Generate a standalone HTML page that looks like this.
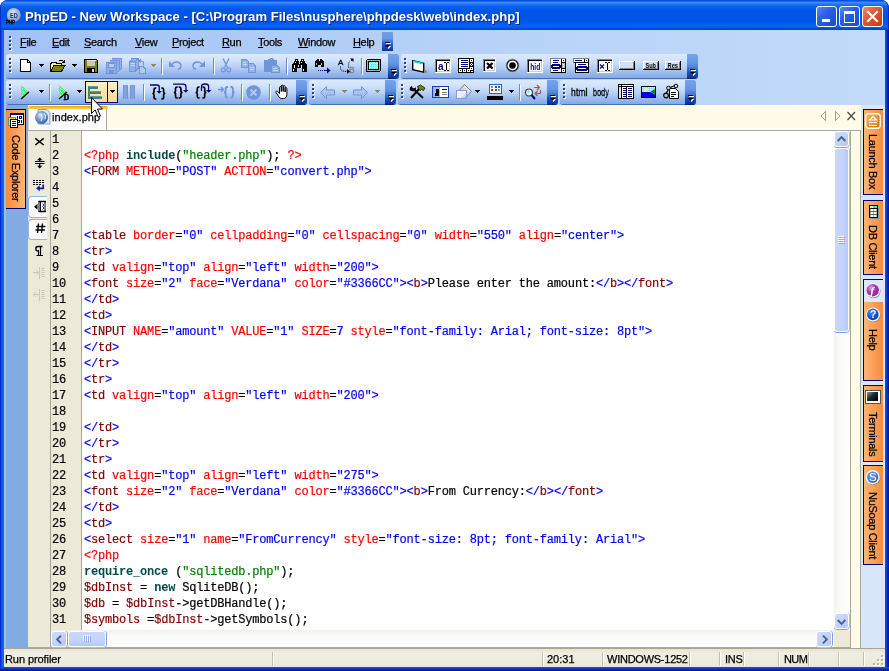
<!DOCTYPE html>
<html>
<head>
<meta charset="utf-8">
<title>PhpED - New Workspace</title>
<style>
html,body{margin:0;padding:0;}
body{width:889px;height:671px;overflow:hidden;position:relative;background:#fff;font-family:"Liberation Sans",sans-serif;font-size:11px;color:#000;}
.a{position:absolute;}
svg{position:absolute;overflow:visible;}
#frame{position:absolute;left:0;top:0;width:889px;height:671px;background:#0a4ae0;border-radius:8px 8px 0 0;overflow:hidden;}
#title{position:absolute;left:0;top:0;width:889px;height:30px;
 background:linear-gradient(#0040d0 0%,#1060ee 4%,#3a8cff 8%,#2a7af8 13%,#0a62f0 21%,#0357e8 32%,#0054e6 50%,#0056ea 74%,#0a64f6 87%,#0552e0 94%,#0240b8 100%);}
#title:after{content:'';position:absolute;left:0;top:0;width:889px;height:30px;box-sizing:border-box;border-left:1px solid #0a30c4;border-right:1px solid #0a2cb8;border-radius:8px 8px 0 0;}
#title .txt{position:absolute;left:25px;top:9px;font-weight:bold;font-size:13.1px;line-height:16px;color:#fff;white-space:nowrap;text-shadow:1px 1px 0 #0a2a88;}
.cap{position:absolute;top:6px;width:19px;height:19px;border:1px solid #fff;border-radius:3px;
 background:linear-gradient(135deg,#5a8cf5 0%,#2a5fe4 40%,#1c49cf 100%);}
.cap.close{background:linear-gradient(135deg,#ec8e72 0%,#e0542c 45%,#c43c14 100%);}
#client{position:absolute;left:4px;top:30px;width:881px;height:637px;background:#c3daf9;}
#dock{position:absolute;left:4px;top:30px;width:881px;height:75px;background:linear-gradient(90deg,#a3c2f5 0%,#b4d0f7 45%,#c3dbfa 100%);}
.tb{position:absolute;height:24px;border-radius:3px 0 0 3px;
 background:linear-gradient(#dceafd 0%,#d1e2fb 25%,#bcd3f6 50%,#9cbcee 76%,#83aae4 100%);box-shadow:0 1px 0 #456db8;}
.tbend{position:absolute;top:0;width:11px;height:24px;border-radius:0 3px 3px 0;
 background:linear-gradient(#75a3ea 0%,#6595e3 38%,#4c7fd6 55%,#1d52b8 76%,#05329a 100%);box-shadow:0 1px 0 #02246c;}
.grip{position:absolute;width:2px;height:2px;background:#27408b;box-shadow:1px 1px 0 #fff;}
.sep{position:absolute;width:1px;height:16px;background:#6a8ccb;box-shadow:1px 1px 0 #fff;}
.mi,.vt,#status .t,.uit{-webkit-text-stroke:0.25px #000;}
.mi{position:absolute;top:6px;font-size:11px;line-height:13px;white-space:nowrap;letter-spacing:-0.35px;}
.mi u{text-decoration:underline;text-underline-offset:1px;}
.dd{position:absolute;width:5px;height:1px;background:#000;}
.dd:before{content:'';position:absolute;left:1px;top:1px;width:3px;height:1px;background:inherit;}
.dd:after{content:'';position:absolute;left:2px;top:2px;width:1px;height:1px;background:inherit;}
.dd.dis{background:#8e8468;}
.code{font-family:"Liberation Mono",monospace;font-size:12px;letter-spacing:-0.19px;line-height:16px;}
.code .ln,.code .cl{height:16px;overflow:visible;white-space:pre;-webkit-text-stroke:0.2px currentColor;}
.code .kw{-webkit-text-stroke:0;}
.r{color:#ff0000}.b{color:#0000ff}.m{color:#800000}.k{color:#000}.g{color:#008000}.kw{color:#004a4a;font-weight:bold}
#status{position:absolute;left:4px;top:648px;width:881px;height:19px;background:linear-gradient(#e6e3d4 0,#efeee4 4px,#eeece0 10px,#ece9d8 17px,#dedac8 19px);border-top:1px solid #aaa693;box-sizing:border-box;}
#status .t{position:absolute;top:4px;font-size:11px;line-height:13px;white-space:nowrap;}
.sdiv{position:absolute;top:3px;width:1px;height:14px;background:#c2bfae;box-shadow:1px 0 0 #fff;}
.sbtn{position:absolute;box-sizing:border-box;border:1px solid #fff;border-radius:3px;background:linear-gradient(135deg,#cfdcfd 0%,#c2d3fc 50%,#b4c8f7 100%);}
.sbtn.v{box-shadow:0 1px 0 #7f9fe0, 1px 0 0 #a9bfee;}
.sbtn.h{box-shadow:1px 0 0 #7f9fe0, 0 1px 0 #a9bfee;}
.sthv{background:linear-gradient(90deg,#c9d7fc 0%,#c6d4fb 55%,#b3c9f7 100%);}
.sthh{background:linear-gradient(#c9d7fc 0%,#c6d4fb 55%,#b3c9f7 100%);}
.vt{position:absolute;writing-mode:vertical-rl;font-size:11px;line-height:15px;width:15px;white-space:nowrap;letter-spacing:-0.3px;}
#bl{position:absolute;left:0;top:30px;width:4px;height:641px;background:linear-gradient(90deg,#0019c0 0,#0a40dc 1px,#0f58ee 2px,#1666f2 3px,#1262ee 4px);}
#br{position:absolute;left:885px;top:30px;width:4px;height:641px;background:linear-gradient(90deg,#0c52e6 0,#0a48dc 1px,#0634c4 2px,#011c9e 3px,#001494 4px);}
#bb{position:absolute;left:0;top:667px;width:889px;height:4px;background:linear-gradient(#0c54ea 0,#0a48dc 1px,#0634c4 2px,#011c9e 3px,#001494 4px);}
.code,.mi,.vt,#status .t,.uit,#title .txt,.gs{will-change:transform;}
</style>
</head>
<body>
<div id="frame">
 <div id="title">
  <svg class="gs" style="left:5px;top:8px" width="18" height="18" viewBox="0 0 18 18">
   <defs><radialGradient id="gl" cx="42%" cy="38%" r="65%"><stop offset="0" stop-color="#e8eef6"/><stop offset="0.55" stop-color="#a9b9d4"/><stop offset="1" stop-color="#7f93bc"/></radialGradient></defs>
   <circle cx="8.800" cy="7" r="7" fill="url(#gl)"/>
   <text x="5" y="9.700" font-family="Liberation Sans, sans-serif" font-weight="bold" font-size="6.800" textLength="7.600" lengthAdjust="spacingAndGlyphs" fill="#0a2a80">ED</text>
   <text x="1" y="15.800" font-family="Liberation Sans, sans-serif" font-weight="bold" font-size="5.500" textLength="9" lengthAdjust="spacingAndGlyphs" fill="#000" stroke="#000" stroke-width="0.300">PHP</text>
  </svg>
  <div class="txt">PhpED - New Workspace - [C:\Program Files\nusphere\phpdesk\web\index.php]</div>
  <div class="cap" style="left:816px"><div class="a" style="left:5px;top:12px;width:8px;height:3px;background:#fff"></div></div>
  <div class="cap" style="left:839px"><div class="a" style="left:4px;top:4px;width:9px;height:8px;border:1px solid #fff;border-top-width:3px;box-sizing:content-box"></div></div>
  <div class="cap close" style="left:862px"><svg style="left:0;top:0" width="19" height="19" viewBox="0 0 19 19"><path d="M5 5 L14 14 M14 5 L5 14" stroke="#fff" stroke-width="2.2" stroke-linecap="square"/></svg></div>
 </div>
 <div id="client"></div>
 <div id="dock"></div>
 <!-- menu bar -->
 <div class="grip" style="left:9px;top:36px"></div><div class="grip" style="left:9px;top:40px"></div><div class="grip" style="left:9px;top:44px"></div><div class="grip" style="left:9px;top:48px"></div>
 <div class="mi" style="left:20px;top:36px"><u>F</u>ile</div>
 <div class="mi" style="left:52px;top:36px"><u>E</u>dit</div>
 <div class="mi" style="left:84px;top:36px"><u>S</u>earch</div>
 <div class="mi" style="left:135px;top:36px"><u>V</u>iew</div>
 <div class="mi" style="left:172px;top:36px"><u>P</u>roject</div>
 <div class="mi" style="left:222px;top:36px"><u>R</u>un</div>
 <div class="mi" style="left:258px;top:36px"><u>T</u>ools</div>
 <div class="mi" style="left:298px;top:36px"><u>W</u>indow</div>
 <div class="mi" style="left:353px;top:36px"><u>H</u>elp</div>
 <div class="a" style="left:382px;top:32px;width:11px;height:19px;background:linear-gradient(#6f9fe8 0%,#6796e4 35%,#2f63c2 62%,#07359a 100%)"></div>
 <!-- toolbars -->
<div class="a" style="left:386px;top:43px;width:5px;height:1px;background:#fff"></div><div class="a" style="left:385px;top:42px;width:5px;height:1px;background:#000"></div><svg style="left:385px;top:45px" width="7" height="5" viewBox="0 0 7 5"><path d="M1 1h5l-2.5 3z" fill="#fff"/><path d="M0 0h5l-2.5 3z" fill="#000"/></svg>
<div class="tb" style="left:6px;top:54px;width:382px"></div><div class="tbend" style="left:388px;top:54px"></div><div class="a" style="left:392px;top:70px;width:5px;height:1px;background:#fff"></div><div class="a" style="left:391px;top:69px;width:5px;height:1px;background:#000"></div><svg style="left:391px;top:72px" width="7" height="5" viewBox="0 0 7 5"><path d="M1 1h5l-2.5 3z" fill="#fff"/><path d="M0 0h5l-2.5 3z" fill="#000"/></svg><div class="grip" style="left:9px;top:58px"></div><div class="grip" style="left:9px;top:62px"></div><div class="grip" style="left:9px;top:66px"></div><div class="grip" style="left:9px;top:70px"></div>
<div class="tb" style="left:401px;top:54px;width:286px"></div><div class="tbend" style="left:687px;top:54px"></div><div class="a" style="left:691px;top:70px;width:5px;height:1px;background:#fff"></div><div class="a" style="left:690px;top:69px;width:5px;height:1px;background:#000"></div><svg style="left:690px;top:72px" width="7" height="5" viewBox="0 0 7 5"><path d="M1 1h5l-2.5 3z" fill="#fff"/><path d="M0 0h5l-2.5 3z" fill="#000"/></svg><div class="grip" style="left:404px;top:58px"></div><div class="grip" style="left:404px;top:62px"></div><div class="grip" style="left:404px;top:66px"></div><div class="grip" style="left:404px;top:70px"></div>
<div class="sep" style="left:161px;top:58px"></div>
<div class="sep" style="left:213px;top:58px"></div>
<div class="sep" style="left:286px;top:58px"></div>
<div class="sep" style="left:361px;top:58px"></div>
<div class="dd" style="left:39px;top:64px"></div>
<div class="dd" style="left:72px;top:64px"></div>
<div class="dd dis" style="left:151px;top:64px"></div>
<div class="tb" style="left:6px;top:80px;width:290px"></div><div class="tbend" style="left:296px;top:80px"></div><div class="a" style="left:300px;top:96px;width:5px;height:1px;background:#fff"></div><div class="a" style="left:299px;top:95px;width:5px;height:1px;background:#000"></div><svg style="left:299px;top:98px" width="7" height="5" viewBox="0 0 7 5"><path d="M1 1h5l-2.5 3z" fill="#fff"/><path d="M0 0h5l-2.5 3z" fill="#000"/></svg><div class="grip" style="left:9px;top:84px"></div><div class="grip" style="left:9px;top:88px"></div><div class="grip" style="left:9px;top:92px"></div><div class="grip" style="left:9px;top:96px"></div>
<div class="tb" style="left:309px;top:80px;width:76px"></div><div class="tbend" style="left:385px;top:80px"></div><div class="a" style="left:389px;top:96px;width:5px;height:1px;background:#fff"></div><div class="a" style="left:388px;top:95px;width:5px;height:1px;background:#000"></div><svg style="left:388px;top:98px" width="7" height="5" viewBox="0 0 7 5"><path d="M1 1h5l-2.5 3z" fill="#fff"/><path d="M0 0h5l-2.5 3z" fill="#000"/></svg><div class="grip" style="left:312px;top:84px"></div><div class="grip" style="left:312px;top:88px"></div><div class="grip" style="left:312px;top:92px"></div><div class="grip" style="left:312px;top:96px"></div>
<div class="tb" style="left:398px;top:80px;width:149px"></div><div class="tbend" style="left:547px;top:80px"></div><div class="a" style="left:551px;top:96px;width:5px;height:1px;background:#fff"></div><div class="a" style="left:550px;top:95px;width:5px;height:1px;background:#000"></div><svg style="left:550px;top:98px" width="7" height="5" viewBox="0 0 7 5"><path d="M1 1h5l-2.5 3z" fill="#fff"/><path d="M0 0h5l-2.5 3z" fill="#000"/></svg><div class="grip" style="left:401px;top:84px"></div><div class="grip" style="left:401px;top:88px"></div><div class="grip" style="left:401px;top:92px"></div><div class="grip" style="left:401px;top:96px"></div>
<div class="tb" style="left:560px;top:80px;width:125px"></div><div class="tbend" style="left:685px;top:80px"></div><div class="a" style="left:689px;top:96px;width:5px;height:1px;background:#fff"></div><div class="a" style="left:688px;top:95px;width:5px;height:1px;background:#000"></div><svg style="left:688px;top:98px" width="7" height="5" viewBox="0 0 7 5"><path d="M1 1h5l-2.5 3z" fill="#fff"/><path d="M0 0h5l-2.5 3z" fill="#000"/></svg><div class="grip" style="left:563px;top:84px"></div><div class="grip" style="left:563px;top:88px"></div><div class="grip" style="left:563px;top:92px"></div><div class="grip" style="left:563px;top:96px"></div>
<div class="sep" style="left:49px;top:84px"></div>
<div class="sep" style="left:143px;top:84px"></div>
<div class="sep" style="left:241px;top:84px"></div>
<div class="sep" style="left:269px;top:84px"></div>
<div class="sep" style="left:519px;top:84px"></div>
<div class="dd" style="left:39px;top:90px"></div>
<div class="dd" style="left:77px;top:90px"></div>
<div class="dd dis" style="left:342px;top:90px"></div>
<div class="dd dis" style="left:375px;top:90px"></div>
<div class="dd" style="left:475px;top:90px"></div>
<div class="dd" style="left:509px;top:90px"></div>
<div class="a" style="left:85px;top:81px;width:31px;height:20px;border:1px solid #000080;background:linear-gradient(#fff2c8,#ffd596);box-sizing:content-box"></div>
<div class="a" style="left:107px;top:81px;width:1px;height:22px;background:#000080"></div>
<div class="dd" style="left:110px;top:90px"></div>
<!--ICONS-->
 <!-- icons -->
<svg style="left:20px;top:59px" width="11" height="13" viewBox="0 0 11 13" shape-rendering="crispEdges"><path d="M0.500 0.500h7l3 3v9h-10z" fill="#fff" stroke="#000"/><path d="M7.500 0.500v3h3" fill="none" stroke="#000"/></svg>
<svg style="left:50px;top:59px" width="16" height="14" viewBox="0 0 16 14" shape-rendering="crispEdges"><path d="M0.500 12.500v-8.500h1l1-1h3l1 1h5v2" fill="#ffe680" stroke="#000"/><path d="M1 5h10v2h-10z" fill="#fff2a8"/><path d="M0.500 12.500l3.500-6h11l-3.500 6z" fill="#808000" stroke="#000"/><path d="M8.500 2.500c1.500-2 4-2 5 0.500" fill="none" stroke="#000"/><path d="M14.500 0.500v3h-3" fill="none" stroke="#000"/></svg>
<svg style="left:84px;top:59px" width="14" height="14" viewBox="0 0 14 14" shape-rendering="crispEdges"><path d="M0.500 0.500h12l1 1v12h-13z" fill="#808000" stroke="#000"/><rect x="3" y="1" width="8" height="6" fill="#c8c8c0"/><rect x="3" y="1" width="8" height="1" fill="#e8e8e0"/><rect x="3" y="9" width="8" height="4.500" fill="#000"/><rect x="8" y="10" width="2" height="3" fill="#d8d8d0"/><rect x="11" y="1" width="1" height="1" fill="#fff"/></svg>
<svg style="left:106px;top:58px" width="16" height="16" viewBox="0 0 16 16" shape-rendering="crispEdges"><path d="M5.500 0.500h10v10l-4 4" fill="#93b1e6" stroke="#7194d6"/><path d="M3.500 2.500h10v10l-2 2" fill="#93b1e6" stroke="#7194d6"/><rect x="0.500" y="4.500" width="10" height="11" fill="#93b1e6" stroke="#7194d6"/><rect x="2.500" y="5.500" width="6" height="4" fill="#b8cdf0" stroke="#7194d6"/><rect x="3" y="12" width="5" height="3" fill="#7194d6"/></svg>
<svg style="left:129px;top:58px" width="17" height="16" viewBox="0 0 17 16" shape-rendering="crispEdges"><path d="M0.500 3.500l2.500-3h6v10l-2.500 3h-6z" fill="#93b1e6" stroke="#7194d6"/><path d="M6.500 3.500v10M0.500 3.500h6l2.500-3" fill="none" stroke="#7194d6"/><path d="M1.500 5.500h4M1.500 7.500h4" stroke="#c5d6f3"/><rect x="3" y="10" width="1" height="1" fill="#7194d6"/><path d="M14.500 7.500v-2.500c0-1.500-1-2-2.500-2h-1" fill="none" stroke="#7194d6" stroke-width="1.200" shape-rendering="auto"/><path d="M9 3l3-2.500v5z" fill="#7194d6" shape-rendering="auto"/><path d="M10.500 8.500h3.500l2 2v5h-5.500z" fill="#b5caef" stroke="#7194d6"/></svg>
<svg style="left:169px;top:61px" width="13" height="9" viewBox="0 0 13 9"><path d="M0 0v6h6z" fill="#7194d6"/><path d="M3 3.500c2-3.500 8-3.500 9 0.500c0.500 2-1 4-3 4" fill="none" stroke="#7194d6" stroke-width="1.400"/></svg>
<svg style="left:192px;top:61px" width="13" height="9" viewBox="0 0 13 9"><path d="M13 0v6h-6z" fill="#7194d6"/><path d="M10 3.500c-2-3.500-8-3.500-9 0.500c-0.500 2 1 4 3 4" fill="none" stroke="#7194d6" stroke-width="1.400"/></svg>
<svg style="left:221px;top:58px" width="10" height="15" viewBox="0 0 10 15"><path d="M2 0.500l4.500 9M8 0.500l-4.500 9" stroke="#7194d6" stroke-width="1.300" fill="none"/><circle cx="2.300" cy="11.800" r="2" fill="none" stroke="#7194d6" stroke-width="1.200"/><circle cx="7.700" cy="11.800" r="2" fill="none" stroke="#7194d6" stroke-width="1.200"/></svg>
<svg style="left:241px;top:59px" width="16" height="14" viewBox="0 0 16 14" shape-rendering="crispEdges"><path d="M0.500 0.500h5l2 2v6h-7z" fill="#93b1e6" stroke="#7194d6"/><path d="M2 3.500h3M2 5.500h4" stroke="#c9d9f4"/><path d="M7.500 4.500h5l2 2v6.500h-7z" fill="#93b1e6" stroke="#7194d6"/><path d="M9 8.500h4M9 10.500h4" stroke="#c9d9f4"/></svg>
<svg style="left:264px;top:58px" width="17" height="15" viewBox="0 0 17 15" shape-rendering="crispEdges"><path d="M0.500 2.500h12v11h-12z" fill="#7194d6" stroke="#7194d6"/><path d="M4.500 2.500v-1h1.500v-1h2v1h1.500v1z" fill="#93b1e6" stroke="#7194d6"/><path d="M7.500 7.500h6l2 2v5h-8z" fill="#93b1e6" stroke="#7194d6"/><path d="M9 10.500h4M9 12.500h5" stroke="#c9d9f4"/></svg>
<svg style="left:292px;top:59px" width="15" height="13" viewBox="0 0 15 13" shape-rendering="crispEdges"><rect x="3" y="0" width="3" height="2" fill="#000"/><rect x="9" y="0" width="3" height="2" fill="#000"/><rect x="2" y="2" width="5" height="2" fill="#000"/><rect x="8" y="2" width="5" height="2" fill="#000"/><rect x="1" y="4" width="6" height="1" fill="#000"/><rect x="8" y="4" width="6" height="1" fill="#000"/><rect x="0" y="5" width="15" height="4" fill="#000"/><rect x="0" y="9" width="5" height="4" fill="#000"/><rect x="10" y="9" width="5" height="4" fill="#000"/><rect x="4" y="1" width="1" height="1" fill="#fff"/><rect x="10" y="1" width="1" height="1" fill="#fff"/><rect x="3" y="3" width="1" height="1" fill="#fff"/><rect x="9" y="3" width="1" height="1" fill="#fff"/><rect x="2" y="6" width="1" height="3" fill="#fff"/><rect x="9" y="6" width="1" height="3" fill="#fff"/><rect x="6" y="6" width="1" height="2" fill="#c8d8f0"/><rect x="1" y="10" width="1" height="2" fill="#fff"/><rect x="11" y="10" width="1" height="2" fill="#fff"/></svg>
<svg style="left:315px;top:59px" width="16" height="15" viewBox="0 0 16 15" shape-rendering="crispEdges"><rect x="2" y="0" width="2" height="1" fill="#000"/><rect x="5" y="0" width="2" height="1" fill="#000"/><rect x="1" y="1" width="3" height="1" fill="#000"/><rect x="5" y="1" width="3" height="1" fill="#000"/><rect x="0" y="2" width="9" height="4" fill="#000"/><rect x="0" y="6" width="3" height="2" fill="#000"/><rect x="6" y="6" width="3" height="2" fill="#000"/><rect x="1" y="4" width="1" height="2" fill="#b0b0b0"/><rect x="6" y="4" width="1" height="2" fill="#b0b0b0"/><rect x="3" y="11" width="1" height="1" fill="#000080"/><rect x="5" y="11" width="1" height="1" fill="#000080"/><rect x="7" y="11" width="1" height="1" fill="#000080"/><rect x="9" y="11" width="6" height="1" fill="#000080"/><path d="M12 8.500l3.500 3l-3.500 3z" fill="#000080" shape-rendering="auto"/></svg>
<svg class="gs" style="left:338px;top:58px" width="17" height="15" viewBox="0 0 17 15"><text x="0" y="7" font-family="Liberation Sans, sans-serif" font-size="8" fill="#000" stroke="#000" stroke-width="0.300">A</text><text x="11" y="15" font-family="Liberation Sans, sans-serif" font-size="8.500" fill="#808080" stroke="#808080" stroke-width="0.300">B</text><path d="M2.500 8.500v1.500c0 2.500 2 3.500 7 3.500" fill="none" stroke="#000" stroke-dasharray="1 1"/><path d="M9 11l3 2.500l-3 2.500z" fill="#000"/><path d="M10.500 9.500v-3c0-2 1-3 3.500-4.500" fill="none" stroke="#000" stroke-dasharray="1 1"/><path d="M12 0.500h3.500v3.500z" fill="#000"/></svg>
<svg style="left:366px;top:59px" width="15" height="13" viewBox="0 0 15 13" shape-rendering="crispEdges"><rect x="0.500" y="0.500" width="14" height="12" rx="1.500" fill="#b0b0a8" stroke="#000"/><rect x="2.500" y="2.500" width="10" height="8" fill="#7fffff" stroke="#000"/><path d="M3 4.500h9M3 6.500h9M3 8.500h9" stroke="#fff" stroke-dasharray="1 1"/><path d="M5.500 3v7M7.500 3v7M9.500 3v7" stroke="#5fd8e8" stroke-dasharray="1 1"/></svg>
<svg style="left:412px;top:60px" width="16" height="13" viewBox="0 0 16 13"><path d="M0.700 0.700l11 2.500v9l-11-2.500z" fill="#fff" stroke="#000" stroke-width="1.400"/><path d="M1 1.200l10 2.300" stroke="#00e0e0" stroke-width="1.600"/><path d="M12 12.500h4l-4-4z" fill="#808080"/></svg>
<svg class="gs" style="left:435px;top:59px" width="16" height="14" viewBox="0 0 16 14" shape-rendering="crispEdges"><rect x="0" y="0" width="16" height="14" fill="#fff"/><path d="M0 13.5h16M15.5 0v14" stroke="#fff"/><path d="M1 12.5h14M14.5 1v12" stroke="#d0cdc0"/><path d="M0 0.500h15M0.500 0v13" stroke="#808080"/><path d="M1 1.500h14M1.500 1v12" stroke="#000"/><text x="3" y="11" font-family="Liberation Sans, sans-serif" font-weight="bold" font-size="10" fill="#000080">a</text><path d="M9 3.500h2m1 0h2M9 11.500h2m1 0h2M11.500 4v7" stroke="#000" fill="none"/></svg>
<svg style="left:458px;top:58px" width="16" height="15" viewBox="0 0 16 15" shape-rendering="crispEdges"><rect x="0" y="0" width="16" height="15" fill="#000"/><rect x="1" y="1" width="10" height="9" fill="#fff"/><path d="M3 2.500h7M3 4.500h7M3 6.500h7M3 8.500h7" stroke="#000080"/><rect x="12" y="1" width="3" height="3" fill="#fff"/><rect x="13" y="2" width="1" height="1" fill="#000"/><rect x="12" y="5" width="3" height="3" fill="#fff"/><path d="M12 5l3 3m0-3l-3 3" stroke="#000" stroke-width="0.800" shape-rendering="auto"/><rect x="12" y="9" width="3" height="3" fill="#fff"/><rect x="13" y="10" width="1" height="1" fill="#000"/><rect x="1" y="11" width="3" height="3" fill="#fff"/><rect x="2" y="12" width="1" height="1" fill="#000"/><rect x="5" y="11" width="3" height="3" fill="#fff"/><rect x="6" y="12" width="1" height="1" fill="#000"/><rect x="9" y="11" width="3" height="3" fill="#fff"/><rect x="10" y="12" width="1" height="1" fill="#000"/><rect x="13" y="13" width="2" height="1" fill="#fff"/></svg>
<svg style="left:483px;top:59px" width="13" height="13" viewBox="0 0 13 13" shape-rendering="crispEdges"><rect x="0" y="0" width="13" height="13" fill="#fff"/><path d="M0 12.5h13M12.5 0v13" stroke="#fff"/><path d="M1 11.5h11M11.5 1v11" stroke="#d0cdc0"/><path d="M0 0.500h12M0.500 0v12" stroke="#808080"/><path d="M1 1.500h11M1.500 1v11" stroke="#000"/><path d="M4 4l5.500 5.500m0-5.500l-5.500 5.500" stroke="#000" stroke-width="2.300" shape-rendering="auto"/></svg>
<svg style="left:506px;top:59px" width="13" height="13" viewBox="0 0 13 13"><circle cx="6.500" cy="6.500" r="5.700" fill="#fff" stroke="#000" stroke-width="1.300"/><circle cx="6.500" cy="6.500" r="6.300" fill="none" stroke="#808080" stroke-width="0.600"/><circle cx="6.500" cy="6.500" r="3.300" fill="#000"/></svg>
<svg class="gs" style="left:527px;top:59px" width="16" height="14" viewBox="0 0 16 14" shape-rendering="crispEdges"><rect x="0" y="0" width="16" height="14" fill="#fff"/><path d="M0 13.5h16M15.5 0v14" stroke="#fff"/><path d="M1 12.5h14M14.5 1v12" stroke="#d0cdc0"/><path d="M0 0.500h15M0.500 0v13" stroke="#808080"/><path d="M1 1.500h14M1.500 1v12" stroke="#000"/><text x="3.300" y="10.800" font-family="Liberation Sans, sans-serif" font-weight="bold" font-size="9" textLength="10" lengthAdjust="spacingAndGlyphs" fill="#000080" shape-rendering="auto">hid</text></svg>
<svg style="left:550px;top:58px" width="16" height="15" viewBox="0 0 16 15" shape-rendering="crispEdges"><rect x="0" y="0" width="16" height="15" fill="#000"/><rect x="0" y="0" width="16" height="1" fill="#808080"/><rect x="0" y="0" width="1" height="15" fill="#808080"/><rect x="1" y="1" width="10" height="13" fill="#fff"/><path d="M3 2.500h6M3 4.500h5M3 12.500h5" stroke="#000080"/><rect x="1" y="7" width="10" height="3" fill="#000080"/><rect x="2" y="6" width="8" height="5" fill="#000080"/><rect x="3" y="8" width="6" height="1" fill="#fff"/><rect x="12" y="1" width="3" height="3" fill="#fff"/><rect x="13" y="2" width="1" height="1" fill="#000"/><rect x="12" y="5" width="3" height="5" fill="#c0c0c0"/><rect x="13" y="6" width="1" height="1" fill="#fff"/><rect x="13" y="8" width="1" height="1" fill="#fff"/><rect x="12" y="11" width="3" height="3" fill="#fff"/><rect x="13" y="12" width="1" height="1" fill="#000"/></svg>
<svg style="left:573px;top:58px" width="16" height="15" viewBox="0 0 16 15" shape-rendering="crispEdges"><rect x="0" y="0" width="16" height="5" fill="#000"/><rect x="0" y="0" width="16" height="1" fill="#808080"/><rect x="0" y="0" width="1" height="5" fill="#808080"/><rect x="1" y="1" width="10" height="3" fill="#fff"/><path d="M2 2.500h7" stroke="#000080"/><rect x="12" y="1" width="3" height="3" fill="#fff"/><rect x="13" y="2" width="1" height="1" fill="#000"/><rect x="2" y="5" width="14" height="10" fill="#000"/><rect x="3" y="5" width="12" height="9" fill="#fff"/><path d="M5 6.500h8" stroke="#000080"/><rect x="3" y="9" width="12" height="3" fill="#000080"/><rect x="4" y="8" width="10" height="5" fill="#000080"/><rect x="5" y="10" width="8" height="1" fill="#fff"/></svg>
<svg style="left:597px;top:59px" width="16" height="14" viewBox="0 0 16 14" shape-rendering="crispEdges"><rect x="0" y="0" width="16" height="14" fill="#fff"/><path d="M0 13.5h16M15.5 0v14" stroke="#fff"/><path d="M1 12.5h14M14.5 1v12" stroke="#d0cdc0"/><path d="M0 0.500h15M0.500 0v13" stroke="#808080"/><path d="M1 1.500h14M1.500 1v12" stroke="#000"/><path d="M3 5.500l4 4m0-4l-4 4" stroke="#000080" stroke-width="1.100" shape-rendering="auto"/><path d="M8 3.500h2m1 0h2M8 11.500h2m1 0h2M10.500 4v7" stroke="#000" fill="none"/></svg>
<svg style="left:619px;top:61px" width="16" height="9" viewBox="0 0 16 9" shape-rendering="crispEdges"><rect x="0" y="0" width="16" height="9" fill="#d2e0f6"/><path d="M0 0.500h15M0.500 0v8" stroke="#fff"/><path d="M0 8.500h16M15.500 0v9" stroke="#000"/><path d="M1 7.500h14M14.500 1v7" stroke="#808080"/></svg>
<svg class="gs" style="left:643px;top:61px" width="16" height="9" viewBox="0 0 16 9" shape-rendering="crispEdges"><rect x="0" y="0" width="16" height="9" fill="#d2e0f6"/><path d="M0 0.500h15M0.500 0v8" stroke="#fff"/><path d="M0 8.500h16M15.500 0v9" stroke="#000"/><path d="M1 7.500h14M14.500 1v7" stroke="#808080"/><text x="2.500" y="7" font-family="Liberation Sans, sans-serif" font-weight="bold" font-size="7" textLength="10.500" lengthAdjust="spacingAndGlyphs" fill="#000" shape-rendering="auto">Sub</text></svg>
<svg class="gs" style="left:665px;top:61px" width="16" height="9" viewBox="0 0 16 9" shape-rendering="crispEdges"><rect x="0" y="0" width="16" height="9" fill="#d2e0f6"/><path d="M0 0.500h15M0.500 0v8" stroke="#fff"/><path d="M0 8.500h16M15.500 0v9" stroke="#000"/><path d="M1 7.500h14M14.500 1v7" stroke="#808080"/><text x="2.500" y="7" font-family="Liberation Sans, sans-serif" font-weight="bold" font-size="7" textLength="10.500" lengthAdjust="spacingAndGlyphs" fill="#000" shape-rendering="auto">Res</text></svg>
<svg style="left:21px;top:85px" width="9" height="15" viewBox="0 0 9 15"><path d="M0 0v14l8-7z" fill="#50f070"/><path d="M0.500 0.500l1 1m-1 1l2 2m-2 1l3 3m-3-1l1 1m-1 1l2 2m-2 0l1 1M2.500 1.500l4 4M3.500 4.500l2 2" stroke="#c8ffc8" stroke-width="0.800" fill="none"/><path d="M0 14l8-7" stroke="#000" stroke-width="1.400" fill="none"/></svg>
<svg class="gs" style="left:59px;top:85px" width="12" height="15" viewBox="0 0 12 15"><path d="M0 0v14l8-7z" fill="#50f070"/><path d="M0.500 0.500l1 1m-1 1l2 2m-2 1l3 3m-3-1l1 1m-1 1l2 2m-2 0l1 1M2.500 1.500l4 4M3.500 4.500l2 2" stroke="#c8ffc8" stroke-width="0.800" fill="none"/><path d="M0 14l8-7" stroke="#000" stroke-width="1.400" fill="none"/><text x="4.500" y="14.500" font-family="Liberation Serif, serif" font-weight="bold" font-size="8" fill="#000" stroke="#000" stroke-width="0.400">D</text></svg>
<svg style="left:88px;top:86px" width="14" height="13" viewBox="0 0 14 13" shape-rendering="crispEdges"><rect x="0" y="0" width="2" height="13" fill="#3f8080"/><rect x="1" y="0" width="9" height="3" fill="#3f8080"/><rect x="1" y="0" width="9" height="1" fill="#5f9c9c"/><rect x="1" y="5" width="12" height="3" fill="#3f8080"/><rect x="1" y="5" width="12" height="1" fill="#5f9c9c"/><rect x="1" y="10" width="13" height="3" fill="#3f8080"/><rect x="1" y="10" width="13" height="1" fill="#5f9c9c"/></svg>
<svg style="left:123px;top:85px" width="12" height="14" viewBox="0 0 12 14" shape-rendering="crispEdges"><rect x="0" y="0" width="5" height="14" fill="#7194d6"/><rect x="7" y="0" width="5" height="14" fill="#7194d6"/><rect x="1" y="0" width="3" height="14" fill="#84a3de"/><rect x="8" y="0" width="3" height="14" fill="#84a3de"/></svg>
<svg style="left:150px;top:84px" width="16" height="16" viewBox="0 0 16 16"><path d="M6.3 4h-0.800q-1.500 0-1.500 1.500v2.5q0 1.500-1.700 1.500q1.700 0 1.700 1.500v2.5q0 1.500 1.500 1.500h0.800M11.3 4h0.800q1.500 0 1.500 1.500v2.5q0 1.500 1.700 1.500q-1.700 0-1.700 1.500v2.5q0 1.500-1.500 1.500h-0.800" fill="none" stroke="#000" stroke-width="1.700"/><path d="M0 1h7c1.800 0 2.300 1 2.300 2.500v4" fill="none" stroke="#000080" stroke-width="1.300"/><path d="M6.500 7h5.400l-2.700 2.800z" fill="#000080"/></svg>
<svg style="left:173px;top:83px" width="17" height="16" viewBox="0 0 17 16"><path d="M4.8 4h-0.800q-1.500 0-1.500 1.500v2.5q0 1.500-1.700 1.500q1.700 0 1.700 1.500v2.5q0 1.500 1.500 1.500h0.800M5.6 4h0.800q1.500 0 1.500 1.500v2.5q0 1.500 1.700 1.500q-1.700 0-1.700 1.500v2.5q0 1.500-1.500 1.500h-0.800" fill="none" stroke="#000" stroke-width="1.700"/><path d="M0 1.200h10c2 0 3 1 3 2.500v3.500" fill="none" stroke="#000080" stroke-width="1.300"/><path d="M10 7h5.400l-2.700 2.800z" fill="#000080"/></svg>
<svg style="left:195px;top:83px" width="17" height="16" viewBox="0 0 17 16"><path d="M4.6 4h-0.800q-1.500 0-1.500 1.500v2.5q0 1.500-1.700 1.500q1.700 0 1.700 1.500v2.5q0 1.500 1.500 1.500h0.800M7.4 4h0.800q1.500 0 1.500 1.500v2.5q0 1.500 1.700 1.500q-1.700 0-1.700 1.500v2.5q0 1.500-1.500 1.500h-0.800" fill="none" stroke="#000" stroke-width="1.700"/><path d="M6.500 8v-4.500c0-1.600 0.800-2.500 3.500-2.500s3.600 0.900 3.600 2.500v3.500" fill="none" stroke="#000080" stroke-width="1.300"/><path d="M11 7h5.400l-2.700 2.800z" fill="#000080"/></svg>
<svg style="left:218px;top:83px" width="18" height="16" viewBox="0 0 18 16"><path d="M10 4h-0.800q-1.500 0-1.500 1.500v2.25q0 1.500-1.700 1.500q1.700 0 1.700 1.500v2.25q0 1.500 1.500 1.500h0.800M12.5 4h0.800q1.500 0 1.500 1.500v2.25q0 1.500 1.700 1.500q-1.700 0-1.700 1.500v2.25q0 1.500-1.500 1.500h-0.800" fill="none" stroke="#7194d6" stroke-width="1.800"/><path d="M0 6.500h5M3 4l2.500 2.500l-2.500 2.500" fill="none" stroke="#7194d6" stroke-width="1.400"/></svg>
<svg style="left:246px;top:85px" width="15" height="15" viewBox="0 0 15 15"><circle cx="7.500" cy="7.500" r="7.300" fill="#7194d6"/><path d="M4.500 4.500l6 6m0-6l-6 6" stroke="#b4c9ef" stroke-width="2"/></svg>
<svg style="left:275px;top:85px" width="14" height="14" viewBox="0 0 14 14"><path d="M4.500 8.500v-6c0-1.200 1.800-1.200 1.800 0v4v-5.500c0-1.200 1.900-1.200 1.900 0v5.500v-5c0-1.200 1.900-1.200 1.900 0v5.500v-3.500c0-1.200 1.800-1.200 1.800 0v6c0 2.500-1.500 4-3.500 4h-1.500c-1.500 0-2.500-0.800-3.500-2.500l-2.400-3.500c-0.600-1 0.600-2 1.500-1.200z" fill="#fff" stroke="#000" stroke-width="1"/></svg>
<svg style="left:320px;top:86px" width="15" height="13" viewBox="0 0 15 13"><path d="M0.500 6.500l6-6v3.500h8v5h-8v3.500z" fill="#a9c4ee" stroke="#7194d6" stroke-width="1"/></svg>
<svg style="left:353px;top:86px" width="15" height="13" viewBox="0 0 15 13"><path d="M14.500 6.500l-6-6v3.500h-8v5h8v3.500z" fill="#a9c4ee" stroke="#7194d6" stroke-width="1"/></svg>
<svg style="left:409px;top:85px" width="16" height="14" viewBox="0 0 16 14"><path d="M2 13l9-10" stroke="#000" stroke-width="2"/><path d="M14 13l-9.500-9" stroke="#000" stroke-width="2"/><path d="M8.500 1.500l3-1.500l4.500 3l-1.500 2.500l-2-1l-1 1l-2-1.500z" fill="#808000" stroke="#000" stroke-width="0.700"/><path d="M1 5.500c-1-2 0-4 2-4.500l0.500 2l2 0.500l1.500-1.500c0.500 2-0.500 4-3 4.500z" fill="#000"/></svg>
<svg style="left:432px;top:86px" width="17" height="12" viewBox="0 0 17 12" shape-rendering="crispEdges"><rect x="0.500" y="0.500" width="16" height="11" fill="#fff" stroke="#1f3fb0"/><rect x="1" y="1" width="7" height="10" fill="#9db9f0"/><path d="M3 10v-3l1-1v-3h2l1 1v2l-1 1l1 1v2z" fill="#000"/><rect x="9" y="1" width="7" height="10" fill="#fff"/><path d="M10 3.500h5" stroke="#000"/><path d="M10 6.500h5M10 8.500h5" stroke="#808080"/></svg>
<svg style="left:456px;top:84px" width="16" height="15" viewBox="0 0 16 15"><defs><linearGradient id="sq" x1="0" y1="0" x2="1" y2="1"><stop offset="0" stop-color="#fff"/><stop offset="0.600" stop-color="#e8eef8"/><stop offset="1" stop-color="#8fb0e8"/></linearGradient></defs><path d="M8.500 0.500l7 7l-6 6.500l-7-7z" fill="#d8d8d0" stroke="#808080"/><path d="M8.500 2l5 5" stroke="#fff"/><rect x="0.500" y="6.500" width="10" height="8" fill="url(#sq)" stroke="#7f9fd8"/></svg>
<svg style="left:487px;top:84px" width="16" height="16" viewBox="0 0 16 16" shape-rendering="crispEdges"><rect x="2.500" y="0.500" width="12" height="9" fill="#f0f4ff" stroke="#2f5fe0"/><rect x="4" y="2" width="2" height="2" fill="#909090"/><rect x="8" y="2" width="2" height="2" fill="#2040e0"/><rect x="11" y="2" width="2" height="2" fill="#109030"/><rect x="4" y="5" width="2" height="2" fill="#e02020"/><rect x="8" y="5" width="2" height="2" fill="#2060c0"/><rect x="11" y="5" width="2" height="2" fill="#f08020"/><rect x="0" y="12" width="16" height="4" fill="#000"/></svg>
<svg style="left:525px;top:84px" width="17" height="16" viewBox="0 0 17 16"><circle cx="4" cy="8.500" r="3.500" fill="#e8f4ff" stroke="#404040" stroke-width="1.200"/><circle cx="3.500" cy="8" r="1" fill="#60e0f0"/><path d="M6.500 11l3.500 4" stroke="#000080" stroke-width="2"/><path d="M9 3.500h5M12 1l2.500 2.500l-2.500 2.500" fill="none" stroke="#a0583c" stroke-width="1.100"/><path d="M15.500 6v3.500h-5M12.500 7l-2.500 2.500l2.500 2.500" fill="none" stroke="#a0583c" stroke-width="1.100"/></svg>
<div class="a gs" style="left:571px;top:86px;font-size:11px;line-height:13px;-webkit-text-stroke:0.350px #000;transform:scaleX(0.760);transform-origin:0 0;letter-spacing:0.300px;white-space:nowrap">html</div>
<div class="a gs" style="left:593px;top:86px;font-size:11px;line-height:13px;-webkit-text-stroke:0.350px #000;transform:scaleX(0.640);transform-origin:0 0;letter-spacing:0.300px;white-space:nowrap">body</div>
<svg style="left:618px;top:84px" width="16" height="15" viewBox="0 0 16 15" shape-rendering="crispEdges"><rect x="0.500" y="0.500" width="15" height="14" fill="#fff" stroke="#000"/><path d="M1 2.500h14" stroke="#000"/><path d="M3.500 1v14M8.500 3v12" stroke="#000"/><path d="M5 4.500h3M5 6.500h3M5 8.500h3M5 10.500h3M5 12.500h3M10 4.500h4M10 6.500h4M10 8.500h4M10 10.500h4M10 12.500h4" stroke="#000080" stroke-width="1"/><rect x="1" y="3" width="2" height="11" fill="#e8e4d0"/></svg>
<svg style="left:641px;top:86px" width="15" height="12" viewBox="0 0 15 12" shape-rendering="crispEdges"><rect x="0.500" y="0.500" width="14" height="11" fill="#8fe8f0" stroke="#000"/><path d="M1 1.500h13M1 3.500h13M1 5.500h13" stroke="#d8fbff" stroke-dasharray="1 1"/><circle cx="5" cy="3.500" r="2" fill="#f8e8a0" shape-rendering="auto"/><path d="M9 6l5-3v5z" fill="#108020" shape-rendering="auto"/><path d="M1 6h8l5 2.500v2.500h-13z" fill="#0000e0" shape-rendering="auto"/></svg>
<svg style="left:663px;top:84px" width="17" height="15" viewBox="0 0 17 15"><path d="M6.500 4.500h6l3 3v7h-9z" fill="#fff" stroke="#000"/><path d="M8 8.500h5M8 10.500h5M8 12.500h3" stroke="#000"/><path d="M3 10l3-6l6-2.500" fill="none" stroke="#000" stroke-width="1.200"/><circle cx="3" cy="11.500" r="2.300" fill="#c0c0c0" stroke="#000" stroke-width="1.200"/><circle cx="5.500" cy="4" r="1.800" fill="#e0e0e0" stroke="#000" stroke-width="1"/><circle cx="13" cy="2" r="1.800" fill="#e0e0e0" stroke="#000" stroke-width="1"/></svg>
 <!-- editor -->
<div class="a" style="left:4px;top:105px;width:24px;height:543px;background:linear-gradient(90deg,#a3c2f3 0,#94b7ee 2px,#82aae3 2px,#82aae3 100%)"></div>
<div class="a" style="left:28px;top:105px;width:833px;height:543px;background:#fffbe8"></div>
<div class="a" style="left:28px;top:128px;width:833px;height:2px;background:#fff"></div>
<div class="a" style="left:28px;top:130px;width:833px;height:518px;background:#aca899"></div>
<div class="a" style="left:851px;top:131px;width:9px;height:517px;background:#fffbe8"></div>
<div class="a" style="left:28px;top:131px;width:22px;height:516px;background:#ece9d8"></div>
<div class="a" style="left:51px;top:131px;width:30px;height:499px;background:#ece9d8"></div>
<div class="a" style="left:82px;top:131px;width:752px;height:499px;background:#fff"></div>
<div class="a" style="left:834px;top:131px;width:16px;height:499px;background:linear-gradient(90deg,#f3f1ec,#fbfbf9 40%,#fefefd)"></div>
<div class="a" style="left:51px;top:630px;width:783px;height:17px;background:linear-gradient(#f3f1ec,#fbfbf9 40%,#fefefd)"></div>
<div class="a" style="left:834px;top:630px;width:16px;height:17px;background:#ece9d8"></div>
<div class="code a" style="left:52px;top:132px;width:30px">
<div class="ln">1</div>
<div class="ln">2</div>
<div class="ln">3</div>
<div class="ln">4</div>
<div class="ln">5</div>
<div class="ln">6</div>
<div class="ln">7</div>
<div class="ln">8</div>
<div class="ln">9</div>
<div class="ln">10</div>
<div class="ln">11</div>
<div class="ln">12</div>
<div class="ln">13</div>
<div class="ln">14</div>
<div class="ln">15</div>
<div class="ln">16</div>
<div class="ln">17</div>
<div class="ln">18</div>
<div class="ln">19</div>
<div class="ln">20</div>
<div class="ln">21</div>
<div class="ln">22</div>
<div class="ln">23</div>
<div class="ln">24</div>
<div class="ln">25</div>
<div class="ln">26</div>
<div class="ln">27</div>
<div class="ln">28</div>
<div class="ln">29</div>
<div class="ln">30</div>
<div class="ln">31</div>
</div>
<div class="code a" style="left:84px;top:132px;width:750px">
<div class="cl"></div>
<div class="cl"><span class="r">&lt;?php</span> <span class="kw">include</span><span class="k">(</span><span class="g">"header.php"</span><span class="k">); </span><span class="r">?&gt;</span></div>
<div class="cl"><span class="b">&lt;</span><span class="m">FORM</span> <span class="r">METHOD</span><span class="k">=</span><span class="b">"POST"</span> <span class="r">ACTION</span><span class="k">=</span><span class="b">"convert.php"&gt;</span></div>
<div class="cl"></div>
<div class="cl"></div>
<div class="cl"></div>
<div class="cl"><span class="b">&lt;</span><span class="m">table</span> <span class="r">border</span><span class="k">=</span><span class="b">"0"</span> <span class="r">cellpadding</span><span class="k">=</span><span class="b">"0"</span> <span class="r">cellspacing</span><span class="k">=</span><span class="b">"0"</span> <span class="r">width</span><span class="k">=</span><span class="b">"550"</span> <span class="r">align</span><span class="k">=</span><span class="b">"center"</span><span class="b">&gt;</span></div>
<div class="cl"><span class="b">&lt;</span><span class="m">tr</span><span class="b">&gt;</span></div>
<div class="cl"><span class="b">&lt;</span><span class="m">td</span> <span class="r">valign</span><span class="k">=</span><span class="b">"top"</span> <span class="r">align</span><span class="k">=</span><span class="b">"left"</span> <span class="r">width</span><span class="k">=</span><span class="b">"200"</span><span class="b">&gt;</span></div>
<div class="cl"><span class="b">&lt;</span><span class="m">font</span> <span class="r">size</span><span class="k">=</span><span class="b">"2"</span> <span class="r">face</span><span class="k">=</span><span class="b">"Verdana"</span> <span class="r">color</span><span class="k">=</span><span class="b">"#3366CC"</span><span class="b">&gt;</span><span class="b">&lt;</span><span class="m">b</span><span class="b">&gt;</span><span class="k">Please enter the amount:</span><span class="b">&lt;/</span><span class="m">b</span><span class="b">&gt;</span><span class="b">&lt;/</span><span class="m">font</span><span class="b">&gt;</span></div>
<div class="cl"><span class="b">&lt;/</span><span class="m">td</span><span class="b">&gt;</span></div>
<div class="cl"><span class="b">&lt;</span><span class="m">td</span><span class="b">&gt;</span></div>
<div class="cl"><span class="b">&lt;</span><span class="m">INPUT</span> <span class="r">NAME</span><span class="k">=</span><span class="b">"amount"</span> <span class="r">VALUE</span><span class="k">=</span><span class="b">"1"</span> <span class="r">SIZE</span><span class="k">=</span><span class="b">7</span> <span class="r">style</span><span class="k">=</span><span class="b">"font-family: Arial; font-size: 8pt"&gt;</span></div>
<div class="cl"><span class="b">&lt;/</span><span class="m">td</span><span class="b">&gt;</span></div>
<div class="cl"><span class="b">&lt;/</span><span class="m">tr</span><span class="b">&gt;</span></div>
<div class="cl"><span class="b">&lt;</span><span class="m">tr</span><span class="b">&gt;</span></div>
<div class="cl"><span class="b">&lt;</span><span class="m">td</span> <span class="r">valign</span><span class="k">=</span><span class="b">"top"</span> <span class="r">align</span><span class="k">=</span><span class="b">"left"</span> <span class="r">width</span><span class="k">=</span><span class="b">"200"</span><span class="b">&gt;</span></div>
<div class="cl"></div>
<div class="cl"><span class="b">&lt;/</span><span class="m">td</span><span class="b">&gt;</span></div>
<div class="cl"><span class="b">&lt;/</span><span class="m">tr</span><span class="b">&gt;</span></div>
<div class="cl"><span class="b">&lt;</span><span class="m">tr</span><span class="b">&gt;</span></div>
<div class="cl"><span class="b">&lt;</span><span class="m">td</span> <span class="r">valign</span><span class="k">=</span><span class="b">"top"</span> <span class="r">align</span><span class="k">=</span><span class="b">"left"</span> <span class="r">width</span><span class="k">=</span><span class="b">"275"</span><span class="b">&gt;</span></div>
<div class="cl"><span class="b">&lt;</span><span class="m">font</span> <span class="r">size</span><span class="k">=</span><span class="b">"2"</span> <span class="r">face</span><span class="k">=</span><span class="b">"Verdana"</span> <span class="r">color</span><span class="k">=</span><span class="b">"#3366CC"</span><span class="b">&gt;</span><span class="b">&lt;</span><span class="m">b</span><span class="b">&gt;</span><span class="k">From Currency:</span><span class="b">&lt;/</span><span class="m">b</span><span class="b">&gt;</span><span class="b">&lt;/</span><span class="m">font</span><span class="b">&gt;</span></div>
<div class="cl"><span class="b">&lt;/</span><span class="m">td</span><span class="b">&gt;</span></div>
<div class="cl"><span class="b">&lt;</span><span class="m">td</span><span class="b">&gt;</span></div>
<div class="cl"><span class="b">&lt;</span><span class="m">select</span> <span class="r">size</span><span class="k">=</span><span class="b">"1"</span> <span class="r">name</span><span class="k">=</span><span class="b">"FromCurrency"</span> <span class="r">style</span><span class="k">=</span><span class="b">"font-size: 8pt; font-family: Arial"&gt;</span></div>
<div class="cl"><span class="r">&lt;?php</span></div>
<div class="cl"><span class="kw">require_once</span><span class="k"> (</span><span class="g">"sqlitedb.php"</span><span class="k">);</span></div>
<div class="cl"><span class="m">$dbInst</span><span class="k"> = </span><span class="kw">new</span><span class="k"> SqliteDB();</span></div>
<div class="cl"><span class="m">$db</span><span class="k"> = </span><span class="m">$dbInst</span><span class="k">-&gt;getDBHandle();</span></div>
<div class="cl"><span class="m">$symbols</span><span class="k"> =</span><span class="m">$dbInst</span><span class="k">-&gt;getSymbols();</span></div>
</div>
<!--EDEXTRA-->
 <!-- active tab -->
 <div class="a" style="left:28px;top:106px;width:79px;height:24px;background:#fff;border-radius:4px 4px 0 0;border-right:1px solid #aca899;border-left:1px solid #d6d3c2;box-sizing:border-box"></div>
 <div class="a" style="left:28px;top:106px;width:80px;height:3px;border-radius:3px 3px 0 0;background:linear-gradient(#e89c08 0%,#ffbe3a 50%,#ffc940 100%)"></div>
 <div class="a" style="left:29px;top:109px;width:77px;height:20px;background:linear-gradient(#ffffff,#fbfbfd)"></div>
 <svg style="left:34px;top:108px" width="17" height="18" viewBox="0 0 17 18">
  <defs><radialGradient id="tg" cx="40%" cy="35%" r="70%"><stop offset="0" stop-color="#cfe0f4"/><stop offset="0.5" stop-color="#6f97cc"/><stop offset="1" stop-color="#2f5a9c"/></radialGradient></defs>
  <path d="M4 1.5h9l3 3v11.5h-12z" fill="#d9e6f8" stroke="#7f9fd0" stroke-width="1"/>
  <circle cx="7.5" cy="9.5" r="6.5" fill="url(#tg)"/>
  <path d="M5 6.5c1.5-1 3 0 3.2 1.6c.2 1.6-.8 3.4-1 5M9.8 5.2c1.6 1.2 2 3.6 1 6" stroke="#eaf2fb" stroke-width="1.1" fill="none"/>
 </svg>
 <div class="a uit" style="left:52px;top:111px;font-size:11px;line-height:13px;letter-spacing:0.05px">index.php</div>
 <!-- tab nav -->
 <svg style="left:819px;top:110px" width="40" height="13" viewBox="0 0 40 13">
  <path d="M6.5 1.5v9l-4.5-4.5z" fill="none" stroke="#9d9d92" stroke-width="1"/>
  <path d="M16.5 1.5v9l4.500-4.500z" fill="none" stroke="#9d9d92" stroke-width="1"/>
  <path d="M28.500 2l7.500 8m0-8l-7.500 8" stroke="#484848" stroke-width="1.250"/>
 </svg>
 <!-- gutter toggled buttons -->
 <div class="a" style="left:28px;top:196px;width:19px;height:22px;background:#fff;border:1px solid #98b4e2;border-right:none;border-radius:4px 0 0 4px;box-sizing:border-box"></div>
 <div class="a" style="left:28px;top:219px;width:19px;height:21px;background:#fff;border:1px solid #98b4e2;border-right:none;border-radius:4px 0 0 4px;box-sizing:border-box"></div>
 <!-- gutter icons -->
 <svg style="left:28px;top:131px" width="22" height="180" viewBox="0 0 22 180">
  <path d="M7.300 7.300l8.400 6.700m0-6.700l-8.400 6.700" stroke="#000" stroke-width="1.500"/>
  <path d="M7 30.500h9.500M7 32.500h9.500" stroke="#000" stroke-width="1"/><path d="M11.700 27v3M11.700 33v3.500" stroke="#000" stroke-width="1.200"/><path d="M9 29.300l2.700-2.800l2.700 2.800zM9 34.700l2.700 2.800l2.700-2.800z" fill="#000"/>
  <path d="M5 49.500h10.500M5 51.500h10.500M5 53.500h8" stroke="#000" stroke-width="1.100" stroke-dasharray="2 1" shape-rendering="crispEdges"/>
  <path d="M15.200 53.500v3.800h-4.500" stroke="#0a1cb0" stroke-width="1.700" fill="none"/><path d="M8 57.300l3.800-3v6z" fill="#0a1cb0"/>
  <path d="M6 75.700l3.500-3v6z" fill="#000"/><rect x="11" y="70.500" width="6" height="10" fill="#fff" stroke="#000" stroke-width="1"/><path d="M10.500 70.500h7.500M10.500 80.500h7.500" stroke="#000" stroke-width="1.400"/><path d="M12.500 71v9" stroke="#000" stroke-width="1"/><path d="M14.500 72.500l1.500 1.500l-1.500 1.500l1.500 1.500l-1.500 1.500" stroke="#2038e8" stroke-width="1" fill="none"/>
  <path d="M10.500 92.500l-1 9.500M14.500 92.500l-1 9.500M8 95.500h9.500M7.500 99h9.500" stroke="#000" stroke-width="1.400"/>
  <path d="M12.500 116v8M10.500 119v5M8.500 124.500h6.500" stroke="#000" stroke-width="1.200" fill="none"/><path d="M14.500 115.500h-4.500a2.200 2.200 0 0 0 0 4.400h1" stroke="#000" stroke-width="1.300" fill="none"/>
  <g stroke="#c9c6b6" stroke-width="1" fill="none"><path d="M11.500 136v12M13.500 137.500h3M13.500 139.500h3M13.500 141.500h3M13.500 143.500h3M13.500 145.500h3M5 141.500h5M8 139l2.500 2.500l-2.500 2.500"/></g>
  <g stroke="#c9c6b6" stroke-width="1" fill="none"><path d="M11.500 158v12M13.500 159.500h3M13.500 161.500h3M13.500 163.500h3M13.500 165.500h3M13.500 167.500h3M5.500 163.500h5M8 161l-2.500 2.500l2.500 2.500"/></g>
 </svg>
 <!-- vertical scrollbar -->
 <div class="sbtn v" style="left:834px;top:131px;width:15px;height:16px"><svg style="left:2px;top:4px" width="9" height="6" viewBox="0 0 9 6"><path d="M0.700 5L4.500 1.200L8.300 5" stroke="#4d6185" stroke-width="1.900" fill="none"/></svg></div>
 <div class="sbtn v sthv" style="left:834px;top:148px;width:15px;height:184px"></div>
 <svg style="left:838px;top:236px" width="8" height="9" viewBox="0 0 8 9"><path d="M1 1.500h6M1 3.500h6M1 5.500h6M1 7.500h6" stroke="#8cb0f8"/><path d="M0 0.500h6M0 2.500h6M0 4.500h6M0 6.500h6" stroke="#fff"/></svg>
 <div class="sbtn v" style="left:834px;top:613px;width:15px;height:16px"><svg style="left:2px;top:5px" width="9" height="6" viewBox="0 0 9 6"><path d="M0.700 1L4.500 4.800L8.300 1" stroke="#4d6185" stroke-width="1.900" fill="none"/></svg></div>
 <!-- horizontal scrollbar -->
 <div class="sbtn h" style="left:51px;top:631px;width:16px;height:16px"><svg style="left:4px;top:3px" width="6" height="9" viewBox="0 0 6 9"><path d="M5 0.700L1.200 4.500L5 8.300" stroke="#4d6185" stroke-width="1.900" fill="none"/></svg></div>
 <div class="sbtn h sthh" style="left:68px;top:631px;width:38px;height:16px"></div>
 <svg style="left:83px;top:635px" width="9" height="8" viewBox="0 0 9 8"><path d="M1.500 1v6M3.500 1v6M5.500 1v6M7.500 1v6" stroke="#8cb0f8"/><path d="M0.500 0v6M2.500 0v6M4.500 0v6M6.500 0v6" stroke="#fff"/></svg>
 <div class="sbtn h" style="left:816px;top:631px;width:16px;height:16px"><svg style="left:5px;top:3px" width="6" height="9" viewBox="0 0 6 9"><path d="M1 0.700L4.800 4.500L1 8.300" stroke="#4d6185" stroke-width="1.900" fill="none"/></svg></div>
 <!-- side tabs -->
<div class="a" style="left:861px;top:105px;width:24px;height:543px;background:#d9e7fb"></div>
<div class="a" style="left:863px;top:109px;width:20px;height:86px;box-sizing:border-box;border:1px solid #000080;border-right:none;background:linear-gradient(90deg,#fdb673 0%,#fb9f58 50%,#fa8a3e 100%)"></div><div class="vt" style="left:865px;top:134px">Launch Box</div>
<div class="a" style="left:863px;top:200px;width:20px;height:75px;box-sizing:border-box;border:1px solid #000080;border-right:none;background:linear-gradient(90deg,#fdb673 0%,#fb9f58 50%,#fa8a3e 100%)"></div><div class="vt" style="left:865px;top:225px">DB Client</div>
<div class="a" style="left:863px;top:279px;width:20px;height:102px;box-sizing:border-box;border:1px solid #000080;border-right:none;background:linear-gradient(90deg,#fdb673 0%,#fb9f58 50%,#fa8a3e 100%)"><div class="a" style="left:0;top:0;width:19px;height:22px;background:#dce9fb"></div></div><div class="vt" style="left:865px;top:329px">Help</div>
<div class="a" style="left:863px;top:385px;width:20px;height:77px;box-sizing:border-box;border:1px solid #000080;border-right:none;background:linear-gradient(90deg,#fdb673 0%,#fb9f58 50%,#fa8a3e 100%)"></div><div class="vt" style="left:865px;top:412px">Terminals</div>
<div class="a" style="left:863px;top:465px;width:20px;height:100px;box-sizing:border-box;border:1px solid #000080;border-right:none;background:linear-gradient(90deg,#fdb673 0%,#fb9f58 50%,#fa8a3e 100%)"></div><div class="vt" style="left:865px;top:492px">NuSoap Client</div>
<div class="a" style="left:6px;top:109px;width:20px;height:100px;box-sizing:border-box;border:1px solid #000080;border-left:none;background:linear-gradient(90deg,#fa883a 0%,#fb9f58 50%,#fdb877 100%)"></div>
<div class="vt" style="left:8px;top:135px">Code Explorer</div>
<!--SIDEICONS-->
 <!-- side icons -->
 <svg style="left:8px;top:113px" width="16" height="15" viewBox="0 0 16 15" shape-rendering="crispEdges">
  <rect x="2.500" y="0.500" width="13" height="11" fill="#fff" stroke="#000"/><rect x="2" y="0" width="14" height="2" fill="#000080"/>
  <path d="M9.500 3v3M13.500 7v3" stroke="#000"/><rect x="11.500" y="3.500" width="2" height="2" fill="none" stroke="#000"/><rect x="9.500" y="7.500" width="2" height="2" fill="none" stroke="#000"/>
  <path d="M0.500 12.500v-8h7v2" fill="#c8c8c0" stroke="#808080"/><path d="M1.500 11v-5.500h5" fill="none" stroke="#ffe040" stroke-dasharray="1 1"/>
  <rect x="2.500" y="6.500" width="7" height="8" fill="#fff" stroke="#000"/><path d="M4 8.500h4M4 10.500h4M4 12.500h4" stroke="#000080"/>
 </svg>
 <svg style="left:865px;top:113px" width="16" height="16" viewBox="0 0 16 16">
  <defs><linearGradient id="lb" x1="0" y1="0" x2="1" y2="1"><stop offset="0" stop-color="#eeb060"/><stop offset="1" stop-color="#de8414"/></linearGradient></defs>
  <rect x="0.750" y="0.750" width="14.500" height="14.500" rx="3" fill="url(#lb)" stroke="#fff" stroke-width="1.300"/>
  <path d="M13.700 3v10.700h-10.700" fill="none" stroke="#b85000" stroke-dasharray="1 1" stroke-width="0.900"/>
  <path d="M8 3.500l3.500 3.500h-7z" fill="none" stroke="#fff" stroke-width="1.200"/><path d="M4 9.500h8M4 12.500h8" stroke="#fff" stroke-width="1.200"/>
 </svg>
 <svg style="left:869px;top:205px" width="10" height="14" viewBox="0 0 10 14" shape-rendering="crispEdges">
  <rect x="0.500" y="0.500" width="8" height="12" fill="#a8b0b0" stroke="#000"/><rect x="1" y="1" width="7" height="2" fill="#30e8e8"/><rect x="1" y="1" width="3" height="2" fill="#d8ffff"/><path d="M1 3.500h7" stroke="#000"/>
  <path d="M1 6.500h7M1 9.500h7" stroke="#606868"/><rect x="2" y="4" width="2" height="2" fill="#fff"/><rect x="5" y="4" width="2" height="2" fill="#fff"/><rect x="2" y="7" width="2" height="2" fill="#fff"/><rect x="5" y="7" width="2" height="2" fill="#fff"/><rect x="2" y="10" width="2" height="2" fill="#fff"/><rect x="5" y="10" width="2" height="2" fill="#fff"/>
  <path d="M9.500 3v10M2 13.500h8" stroke="#7f8f8f"/>
 </svg>
 <svg class="gs" style="left:865px;top:283px" width="17" height="16" viewBox="0 0 17 16">
  <defs><radialGradient id="fg" cx="35%" cy="30%" r="75%"><stop offset="0" stop-color="#dc9ae0"/><stop offset="0.500" stop-color="#a838b0"/><stop offset="1" stop-color="#8a2494"/></radialGradient></defs>
  <circle cx="8.600" cy="8.300" r="6.900" fill="#8a8a90"/><circle cx="8" cy="7.600" r="7" fill="#fff"/><circle cx="7.700" cy="7.200" r="6.200" fill="url(#fg)"/>
  <text x="5.500" y="11" font-family="Liberation Serif, serif" font-style="italic" font-weight="bold" font-size="11" fill="#fff">f</text>
 </svg>
 <svg class="gs" style="left:865px;top:307px" width="17" height="16" viewBox="0 0 17 16">
  <defs><radialGradient id="qg" cx="35%" cy="30%" r="75%"><stop offset="0" stop-color="#4a86ee"/><stop offset="0.600" stop-color="#1858d0"/><stop offset="1" stop-color="#0c3cb0"/></radialGradient></defs>
  <circle cx="8.600" cy="8.300" r="6.900" fill="#8a8a90"/><circle cx="8" cy="7.600" r="7" fill="#fff"/><circle cx="7.800" cy="7.400" r="5.800" fill="url(#qg)"/>
  <text x="4.900" y="11.300" font-family="Liberation Sans, sans-serif" font-weight="bold" font-size="10.500" fill="#fff">?</text>
 </svg>
 <svg style="left:865px;top:390px" width="16" height="14" viewBox="0 0 16 14" shape-rendering="crispEdges">
  <defs><linearGradient id="tm" x1="0" y1="0" x2="1" y2="1"><stop offset="0" stop-color="#8a9292"/><stop offset="0.450" stop-color="#202828"/><stop offset="1" stop-color="#000"/></linearGradient></defs>
  <rect x="0" y="0" width="16" height="14" fill="#4a545c"/><rect x="1" y="1" width="14" height="12" fill="#fff"/><rect x="2" y="2" width="11" height="9" fill="url(#tm)"/>
 </svg>
 <svg class="gs" style="left:865px;top:470px" width="17" height="16" viewBox="0 0 17 16">
  <defs><radialGradient id="sg" cx="40%" cy="35%" r="70%"><stop offset="0" stop-color="#78a0e8"/><stop offset="0.700" stop-color="#4a78d0"/><stop offset="1" stop-color="#2a50a8"/></radialGradient></defs>
  <circle cx="8.400" cy="7.900" r="7" fill="#70787c"/><circle cx="7.700" cy="7.200" r="7.200" fill="#eaf4fa"/><circle cx="7.700" cy="7.200" r="5.600" fill="url(#sg)"/>
  <text x="4" y="11.300" font-family="Liberation Sans, sans-serif" font-size="11.500" fill="#fff">S</text>
 </svg>
 <!-- mouse cursor -->
 <svg style="left:91px;top:97px" width="13" height="21" viewBox="0 0 13 21">
  <path d="M0.500 0.500v16l3.700-3.600l3 7.200l2.300-1l-3-7h5z" fill="#fff" stroke="#000" stroke-width="1" stroke-linejoin="miter"/>
 </svg>
 <!-- status bar -->
 <div id="status">
  <div class="t" style="left:1px;letter-spacing:-0.08px">Run profiler</div>
  <div class="t" style="left:543px">20:31</div>
  <div class="t" style="left:603px;letter-spacing:-0.25px">WINDOWS-1252</div>
  <div class="t" style="left:721px;letter-spacing:-0.2px">INS</div>
  <div class="t" style="left:780px;letter-spacing:-0.6px">NUM</div>
  <div class="sdiv" style="left:268px"></div>
  <div class="sdiv" style="left:538px"></div>
  <div class="sdiv" style="left:598px"></div>
  <div class="sdiv" style="left:685px"></div>
  <div class="sdiv" style="left:715px"></div>
  <div class="sdiv" style="left:739px"></div>
  <div class="sdiv" style="left:774px"></div>
  <div class="sdiv" style="left:804px"></div>
  <div class="sdiv" style="left:834px"></div>
  <div class="sdiv" style="left:859px"></div>
  <svg style="left:869px;top:6px" width="12" height="12" viewBox="0 0 12 12" shape-rendering="crispEdges"><g fill="#fff"><rect x="9" y="1" width="2" height="2"/><rect x="5" y="5" width="2" height="2"/><rect x="9" y="5" width="2" height="2"/><rect x="1" y="9" width="2" height="2"/><rect x="5" y="9" width="2" height="2"/><rect x="9" y="9" width="2" height="2"/></g><g fill="#b8b4a2"><rect x="8" y="0" width="2" height="2"/><rect x="4" y="4" width="2" height="2"/><rect x="8" y="4" width="2" height="2"/><rect x="0" y="8" width="2" height="2"/><rect x="4" y="8" width="2" height="2"/><rect x="8" y="8" width="2" height="2"/></g></svg>
 </div>
 <div id="bl"></div><div id="br"></div><div id="bb"></div>
</div>
</body>
</html>
